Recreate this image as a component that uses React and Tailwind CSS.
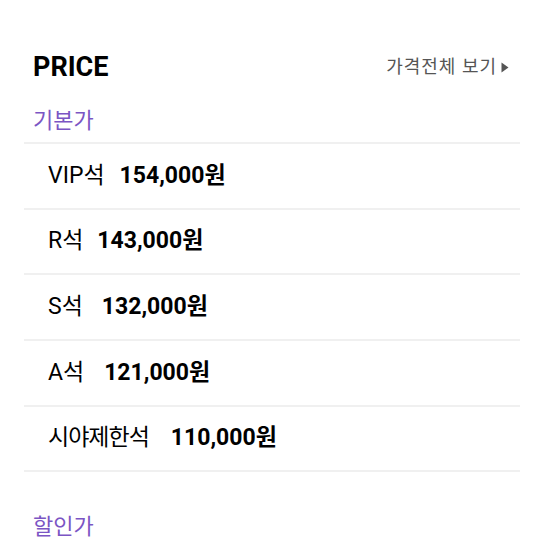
export default function App() {
  const rows = [
    ["VIP석", "ml-[15px]", "154,000원"],
    ["R석", "ml-[14px]", "143,000원"],
    ["S석", "ml-[19px]", "132,000원"],
    ["A석", "ml-[20px]", "121,000원"],
    ["시야제한석", "ml-[22px]", "110,000원"],
  ];
  const font = { fontFamily: 'Roboto, "Noto Sans CJK KR", sans-serif' };
  return (
    <div className="w-[541px] h-[541px] bg-white overflow-hidden" style={font}>
      <div className="pt-[50px] pl-[24px] pr-[21px]">
        <div className="flex items-center justify-between pl-[9px] pr-[11px] h-[34px]">
          <div className="text-[27px] font-bold text-black leading-none">PRICE</div>
          <div className="flex items-center text-[18px] text-[#555] leading-none">
            <span className="tracking-[1px]">가격전체 보기</span>
            <svg width="8" height="11" viewBox="0 0 8 11" className="ml-[4px]">
              <path d="M0.5 0.5 L7.5 5.5 L0.5 10.5 Z" fill="#555" />
            </svg>
          </div>
        </div>
        <div className="pl-[9px] pt-[26px] h-[58px] text-[22px] text-[#7b55c4] leading-none">기본가</div>
        <div className="border-t-2 border-[#f0f0f0]">
          {rows.map(([a, ml, b]) => (
            <div key={a} className="h-[65.7px] border-b-2 border-[#f0f0f0] flex items-center pl-[24px] text-[23px] text-black">
              <span className={a === "시야제한석" ? "tracking-[-1px]" : ""}>{a}</span>
              <span className={`font-bold ${ml}`}>{b}</span>
            </div>
          ))}
        </div>
        <div className="pl-[9px] pt-[44px] text-[22px] text-[#7b55c4] leading-none">할인가</div>
      </div>
    </div>
  );
}
